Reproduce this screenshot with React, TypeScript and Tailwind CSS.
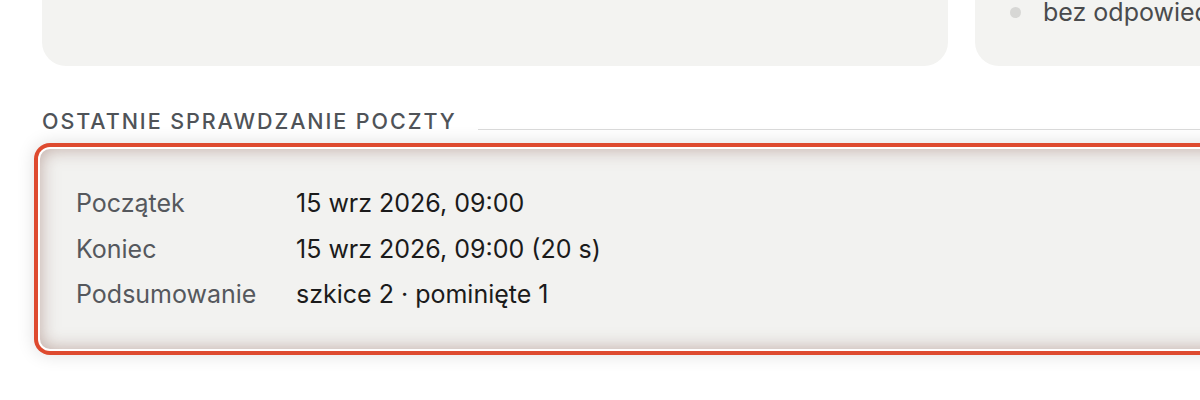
export default function App() {
  const rows = [
    { label: "Początek", value: "15 wrz 2026, 09:00" },
    { label: "Koniec", value: "15 wrz 2026, 09:00 (20 s)" },
    { label: "Podsumowanie", value: "szkice 2 · pominięte 1" },
  ];

  return (
    <div className="h-[400px] w-[1200px] overflow-hidden bg-white font-['Inter','Noto_Sans',sans-serif]">
      <div className="w-[1900px] pl-[42px]">
        {/* cards above, cut by the top edge */}
        <div className="-mt-[64px] flex gap-[27px]">
          <div className="h-[130px] w-[906px] rounded-[24px] bg-[#f3f3f1]" />
          <div className="flex h-[130px] w-[906px] items-end rounded-[24px] bg-[#f3f3f1] pb-[39px] pl-[35px]">
            <div className="flex items-center gap-[22px]">
              <span className="h-[11px] w-[11px] rounded-full bg-[#d7d7d5]" />
              <span className="text-[25px] leading-[30px] text-[#4a4b4d]">bez odpowiedzi</span>
            </div>
          </div>
        </div>

        <div className="mt-[41px] flex w-[1158px] items-end gap-[21px]">
          <h2 className="text-[21.5px] leading-[28px] font-medium tracking-[0.09em] text-[#4f5358] uppercase">
            Ostatnie sprawdzanie poczty
          </h2>
          <div className="mb-[5px] h-px flex-1 bg-[#d9d9d9]" />
        </div>

        <div className="-ml-[2px] mt-[14px] w-[1400px] rounded-[10px] bg-[#f2f2f0] pt-[32px] pb-[31px] pl-[36px] shadow-[inset_0_0_18px_rgba(140,95,85,0.5),0_0_0_2px_#ffffff,0_0_0_6px_#de4a2f,0_0_18px_6px_rgba(0,0,0,0.13)]">
          {rows.map((r) => (
            <div key={r.label} className="flex text-[25px] leading-[45.5px]">
              <span className="w-[220px] text-[#55585d]">{r.label}</span>
              <span className="text-[#1b1b1b]">{r.value}</span>
            </div>
          ))}
        </div>
      </div>
    </div>
  );
}
